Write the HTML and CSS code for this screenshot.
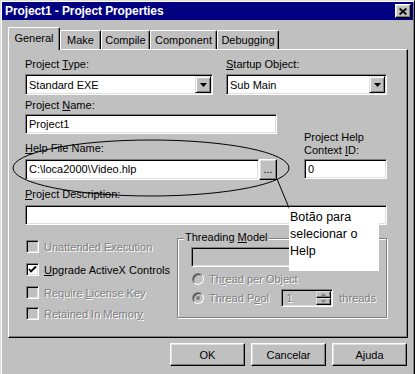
FILE: index.html
```html
<!DOCTYPE html>
<html>
<head>
<meta charset="utf-8">
<title>Project1 - Project Properties</title>
<link rel="stylesheet" href="styles.css">
</head>
<body>
<div class="window">
  <div class="titlebar">
    <span class="title">Project1 - Project Properties</span>
    <span class="close"><svg width="8" height="7" viewBox="0 0 8 7"><path d="M0.6 0.5 L7.4 6.5 M7.4 0.5 L0.6 6.5" stroke="#000" stroke-width="1.7" fill="none"/></svg></span>
  </div>
  <div class="content">
    <div class="tabs">
      <div class="tab active tab-general">General</div>
      <div class="tab tab-make">Make</div>
      <div class="tab tab-compile">Compile</div>
      <div class="tab tab-component">Component</div>
      <div class="tab tab-debugging">Debugging</div>
    </div>
    <div class="panel">
      <div class="row-top">
        <div class="field">
          <div class="lbl">Project <u>T</u>ype:</div>
          <div class="combo"><span class="combo-val">Standard EXE</span><span class="dd"><svg width="7" height="4" viewBox="0 0 7 4"><polygon points="0,0 7,0 3.5,4" fill="#000"/></svg></span></div>
        </div>
        <div class="field">
          <div class="lbl"><u>S</u>tartup Object:</div>
          <div class="combo"><span class="combo-val">Sub Main</span><span class="dd"><svg width="7" height="4" viewBox="0 0 7 4"><polygon points="0,0 7,0 3.5,4" fill="#000"/></svg></span></div>
        </div>
      </div>
      <div class="row-mid">
        <div class="col-left">
          <div class="lbl">Project <u>N</u>ame:</div>
          <div class="textbox name-box">Project1</div>
          <div class="lbl help-lbl"><u>H</u>elp File Name:</div>
          <div class="help-row">
            <div class="textbox help-box">C:\loca2000\Video.hlp</div>
            <div class="btn btn-dots">...</div>
          </div>
        </div>
        <div class="col-right">
          <div class="lbl ctx-lbl">Project Help<br>Context <u>I</u>D:</div>
          <div class="textbox ctx-box">0</div>
        </div>
      </div>
      <div class="lbl desc-lbl"><u>P</u>roject Description:</div>
      <div class="textbox desc-box"></div>
      <div class="row-bottom">
        <div class="checks">
          <div class="check"><span class="cbox dis"></span><span class="dis-text">Unattended Execution</span></div>
          <div class="check"><span class="cbox"><svg width="11" height="11" viewBox="0 0 11 11"><polyline points="2,5 4,7.5 9,2.5" fill="none" stroke="#000" stroke-width="1.8"/></svg></span><span><u>U</u>pgrade ActiveX Controls</span></div>
          <div class="check"><span class="cbox dis"></span><span class="dis-text">Require <u>L</u>icense Key</span></div>
          <div class="check check-last"><span class="cbox dis"></span><span class="dis-text">Retained In Memor<u>y</u></span></div>
        </div>
        <div class="group">
          <div class="legend">Threading <u>M</u>odel</div>
          <div class="textbox group-combo"></div>
          <div class="radios">
            <div class="radio-row"><span class="radio"></span><span class="dis-text">Th<u>r</u>ead per Object</span></div>
            <div class="radio-row"><span class="radio on"></span><span class="dis-text pool-lbl">Thread P<u>o</u>ol</span>
              <span class="spin"><span class="spin-val dis-text">1</span><span class="spin-btns"><span class="spin-btn"><svg width="5" height="3" viewBox="0 0 5 3"><polygon points="2.5,0 5,3 0,3" fill="#808080"/></svg></span><span class="spin-btn"><svg width="5" height="3" viewBox="0 0 5 3"><polygon points="0,0 5,0 2.5,3" fill="#808080"/></svg></span></span></span>
              <span class="dis-text threads">threads</span>
            </div>
          </div>
        </div>
      </div>
    </div>
    <div class="buttons">
      <div class="btn btn-main">OK</div>
      <div class="btn btn-main">Cancelar</div>
      <div class="btn btn-main">Ajuda</div>
    </div>
  </div>
</div>
<svg class="annot" width="415" height="374" viewBox="0 0 415 374">
  <ellipse cx="151" cy="168" rx="138" ry="28" fill="none" stroke="#000" stroke-width="1"/>
  <line x1="277" y1="179" x2="289.5" y2="209" stroke="#000" stroke-width="1"/>
</svg>
<div class="note">Botão para<br>selecionar o<br>Help</div>
</body>
</html>
```

FILE: styles.css
```css
* { box-sizing: border-box; }
html, body { margin: 0; padding: 0; }
body {
  width: 415px;
  height: 374px;
  overflow: hidden;
  background: #c0c0c0;
  font-family: "Liberation Sans", Arial, sans-serif;
  font-size: 11px;
  color: #000;
}
u { text-decoration: underline; text-underline-offset: 1px; }

.window {
  width: 415px;
  height: 376px;
  background: #c0c0c0;
  border: 1px solid;
  border-color: #dfdfdf #000 #000 #dfdfdf;
  box-shadow: inset 1px 1px #fff, inset -1px -1px #808080;
  padding: 1px;
}
.titlebar {
  height: 18px;
  background: #000080;
  color: #fff;
  display: flex;
  align-items: center;
  justify-content: space-between;
  padding: 0 2px 0 3px;
}
.title { font-weight: bold; font-size: 12px; line-height: 18px; letter-spacing: -0.1px; }
.close {
  width: 16px;
  height: 14px;
  background: #c0c0c0;
  border: 1px solid;
  border-color: #fff #000 #000 #fff;
  box-shadow: inset -1px -1px #808080, inset 1px 1px #dfdfdf;
  display: flex;
  align-items: center;
  justify-content: center;
}

.content { padding: 7px 5px 0 6px; }
.tabs {
  display: flex;
  align-items: flex-end;
  height: 23px;
  margin-bottom: -1px;
  position: relative;
  z-index: 1;
}
.tab {
  height: 19px;
  margin-bottom: 1px;
  padding-top: 2px;
  line-height: 15px;
  text-align: center;
  background: #c0c0c0;
  border: 1px solid;
  border-bottom: 0;
  border-color: #fff #000 #000 #fff;
  box-shadow: inset -1px 0 #808080;
  border-radius: 2px 2px 0 0;
  white-space: nowrap;
}
.tab.active { height: 23px; margin-bottom: 0; padding-top: 3px; }
.tab-general { width: 52px; }
.tab-make { width: 41px; }
.tab-compile { width: 49px; }
.tab-component { width: 67px; }
.tab-debugging { width: 62px; }

.panel {
  width: 400px;
  height: 289px;
  border: 1px solid;
  border-color: #fff #000 #000 #fff;
  box-shadow: inset -1px -1px #808080;
  padding: 8px 20px 0 16px;
}
.lbl { display: block; height: 13px; line-height: 13px; white-space: nowrap; }

.row-top { display: grid; grid-template-columns: 188px 161px; column-gap: 13px; }
.combo {
  margin-top: 3px;
  height: 21px;
  display: flex;
  align-items: center;
  justify-content: space-between;
  background: #fff;
  border: 1px solid;
  border-color: #808080 #fff #fff #808080;
  box-shadow: inset 1px 1px #000, inset -1px -1px #dfdfdf;
  padding: 1px 1px 1px 3px;
}
.dd {
  width: 16px;
  height: 17px;
  background: #c0c0c0;
  border: 1px solid;
  border-color: #dfdfdf #000 #000 #dfdfdf;
  box-shadow: inset 1px 1px #fff, inset -1px -1px #808080;
  display: flex;
  align-items: center;
  justify-content: center;
}

.textbox {
  height: 20px;
  line-height: 18px;
  background: #fff;
  border: 1px solid;
  border-color: #808080 #fff #fff #808080;
  box-shadow: inset 1px 1px #000, inset -1px -1px #dfdfdf;
  padding: 0 3px;
  white-space: nowrap;
  overflow: hidden;
}

.row-mid {
  display: grid;
  grid-template-columns: 252px 83px;
  column-gap: 27px;
  align-items: end;
  margin-top: 4px;
}
.name-box { margin-top: 2px; }
.help-lbl { margin-top: 8px; }
.help-row { display: flex; margin-top: 4px; height: 21px; }
.help-box { width: 234px; height: 21px; line-height: 19px; }
.btn {
  background: #c0c0c0;
  border: 1px solid;
  border-color: #fff #000 #000 #fff;
  box-shadow: inset -1px -1px #808080, inset 1px 1px #dfdfdf;
  display: flex;
  align-items: center;
  justify-content: center;
}
.btn-dots { width: 18px; height: 21px; padding-bottom: 2px; }
.ctx-lbl { height: 26px; }
.ctx-box { margin-top: 2px; margin-bottom: 1px; }

.desc-lbl { margin-top: 8px; }
.desc-box { margin-top: 4px; }

.row-bottom {
  display: grid;
  grid-template-columns: 152px 210px;
  margin-top: 6px;
}
.checks { padding-top: 4px; }
.check {
  display: flex;
  align-items: center;
  gap: 5px;
  height: 23px;
  padding-left: 1px;
  white-space: nowrap;
}
.check-last { height: 19px; }
.cbox {
  width: 13px;
  height: 13px;
  flex: none;
  background: #fff;
  border: 1px solid;
  border-color: #808080 #fff #fff #808080;
  box-shadow: inset 1px 1px #000, inset -1px -1px #dfdfdf;
  display: flex;
  align-items: center;
  justify-content: center;
}
.cbox.dis { background: #c0c0c0; }
.dis-text { color: #808080; text-shadow: 1px 1px 0 #fff; }

.group {
  margin-top: 7px;
  height: 80px;
  border: 1px solid #808080;
  box-shadow: 1px 1px 0 #fff, inset 1px 1px 0 #fff;
  padding: 0 10px 0 13px;
}
.legend {
  width: max-content;
  margin: -9px 0 0 -7px;
  padding: 0 1px;
  line-height: 14px;
  background: #c0c0c0;
}
.group-combo {
  margin-top: 3px;
  width: 180px;
  background: #c0c0c0;
}
.radios { margin-top: 2px; }
.radio-row {
  display: flex;
  align-items: center;
  height: 19px;
  padding-left: 1px;
  white-space: nowrap;
}
.radio {
  position: relative;
  width: 12px;
  height: 12px;
  flex: none;
  margin-right: 5px;
  border-radius: 50%;
  border: 1px solid;
  border-color: #808080 #fff #fff #808080;
  box-shadow: inset 1px 1px 0 #404040;
  background: #c0c0c0;
}
.radio.on::after {
  content: "";
  position: absolute;
  left: 3px;
  top: 3px;
  width: 4px;
  height: 4px;
  border-radius: 50%;
  background: #808080;
}
.pool-lbl { width: 74px; }
.spin {
  display: flex;
  width: 53px;
  height: 18px;
  border: 1px solid;
  border-color: #808080 #fff #fff #808080;
  box-shadow: inset 1px 1px #000, inset -1px -1px #dfdfdf;
  padding: 1px;
  background: #c0c0c0;
}
.spin-val { flex: 1; padding-left: 3px; line-height: 14px; }
.spin-btns { width: 15px; display: flex; flex-direction: column; }
.spin-btn {
  flex: 1;
  background: #c0c0c0;
  border: 1px solid;
  border-color: #dfdfdf #000 #000 #dfdfdf;
  box-shadow: inset -1px -1px #808080;
  display: flex;
  align-items: center;
  justify-content: center;
}
.threads { margin-left: 6px; }

.buttons {
  display: flex;
  justify-content: flex-end;
  gap: 6px;
  margin-top: 5px;
  padding-right: 1px;
}
.btn-main { width: 75px; height: 23px; }

.annot { position: absolute; left: 0; top: 0; pointer-events: none; }
.note {
  position: absolute;
  left: 289px;
  top: 207px;
  width: 90px;
  height: 64px;
  background: #fff;
  padding: 2px 0 0 1px;
  font-size: 12.5px;
  line-height: 17px;
  white-space: nowrap;
}
```
